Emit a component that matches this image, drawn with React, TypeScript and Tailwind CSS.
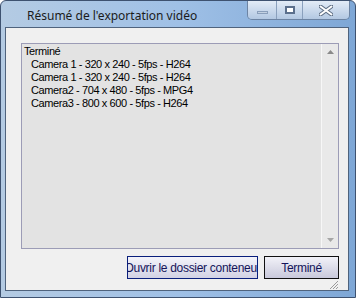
import React from "react";

const items = [
  "Camera 1 - 320 x 240 - 5fps - H264",
  "Camera 1 - 320 x 240 - 5fps - H264",
  "Camera2 - 704 x 480 - 5fps - MPG4",
  "Camera3 - 800 x 600 - 5fps - H264",
];

const CaptionButtons = () => (
  <div className="flex h-[19px] mr-[5px] border border-t-0 border-[#6d84a3] rounded-b-[5px] overflow-hidden">
    <div className="w-[29px] flex items-center justify-center bg-gradient-to-b from-[#e3ecf7] to-[#b3c8e2] border-r border-[#8aa0bd]">
      <div className="w-[11px] h-[3px] mt-[5px] bg-[#c3d1e2] border border-[#8a9fbb]" />
    </div>
    <div className="w-[26px] flex items-center justify-center bg-gradient-to-b from-[#e3ecf7] to-[#b3c8e2] border-r border-[#8aa0bd]">
      <div className="w-[10px] h-[8px] border-2 border-[#5b6f8c] bg-white" />
    </div>
    <div className="w-[46px] flex items-center justify-center bg-gradient-to-b from-[#e3ecf7] to-[#b3c8e2]">
      <svg width="14" height="11" viewBox="0 0 14 11">
        <path
          d="M1.5 1.5 L12.5 9.5 M12.5 1.5 L1.5 9.5"
          stroke="#5f6f85"
          strokeWidth="4"
          strokeLinecap="round"
        />
        <path
          d="M1.5 1.5 L12.5 9.5 M12.5 1.5 L1.5 9.5"
          stroke="#ffffff"
          strokeWidth="2"
          strokeLinecap="round"
        />
      </svg>
    </div>
  </div>
);

const App = () => {
  return (
    <div className="w-[356px] h-[298px] flex flex-col overflow-hidden bg-gradient-to-r from-[#b4cbe3] via-[#9fc0e6] to-[#7ea7d6] border border-[#3e5270] rounded-t-[6px]">
      <div className="h-[27px] flex items-start">
        <span className="pl-[26px] pt-[6px] text-[12px] text-[#1b1b1b] font-['Noto_Sans',sans-serif]">
          Résumé de l'exportation vidéo
        </span>
        <div className="ml-auto">
          <CaptionButtons />
        </div>
      </div>
      <div className="flex-1 ml-[4px] mr-[6px] mb-[6px] bg-[#f0f0f0] border border-[#4f637d] flex flex-col pl-[15px] pr-[9px] pt-[15px]">
        <div className="h-[206px] flex border border-[#9c9cb6] bg-[#e3e3e3]">
          <div className="flex-1 pl-[2px] pt-[1px] text-[11px] leading-[13px] tracking-[-0.4px] text-black font-['Liberation_Sans',sans-serif]">
            <div>Terminé</div>
            {items.map((it, i) => (
              <div key={i} className="pl-[7px]">
                {it}
              </div>
            ))}
          </div>
          <div className="w-[17px] flex flex-col justify-between items-center bg-[#e9e9e9] border-l border-[#f7f7f7] py-[6px]">
            <svg width="7" height="4" viewBox="0 0 7 4">
              <path d="M0 4 L3.5 0 L7 4 Z" fill="#8a8a8a" />
            </svg>
            <svg width="7" height="4" viewBox="0 0 7 4">
              <path d="M0 0 L3.5 4 L7 0 Z" fill="#a6a6a6" />
            </svg>
          </div>
        </div>
        <div className="flex justify-end gap-[6px] mt-[7px] text-[12px] tracking-[-0.3px] font-['Liberation_Sans',sans-serif]">
          <div className="w-[131px] h-[23px] flex items-center justify-center overflow-hidden whitespace-nowrap border border-[#0a1f7c] bg-gradient-to-b from-[#f4f4fa] to-[#d2d2e4] text-[#14145a]">
            <span className="shrink-0">Ouvrir le dossier conteneur</span>
          </div>
          <div className="w-[75px] h-[23px] flex items-center justify-center border border-[#111111] bg-gradient-to-b from-[#f2f2f8] to-[#c9c9db] text-[#14145a]">
            Terminé
          </div>
        </div>
        <div className="flex-1 flex justify-end items-end">
          <svg width="11" height="11" viewBox="0 0 11 11">
            <path
              d="M10 2 L2 10 M10 5 L5 10 M10 8 L8 10"
              stroke="#9a9a9a"
              strokeWidth="1"
            />
          </svg>
        </div>
      </div>
    </div>
  );
};

export default App;
